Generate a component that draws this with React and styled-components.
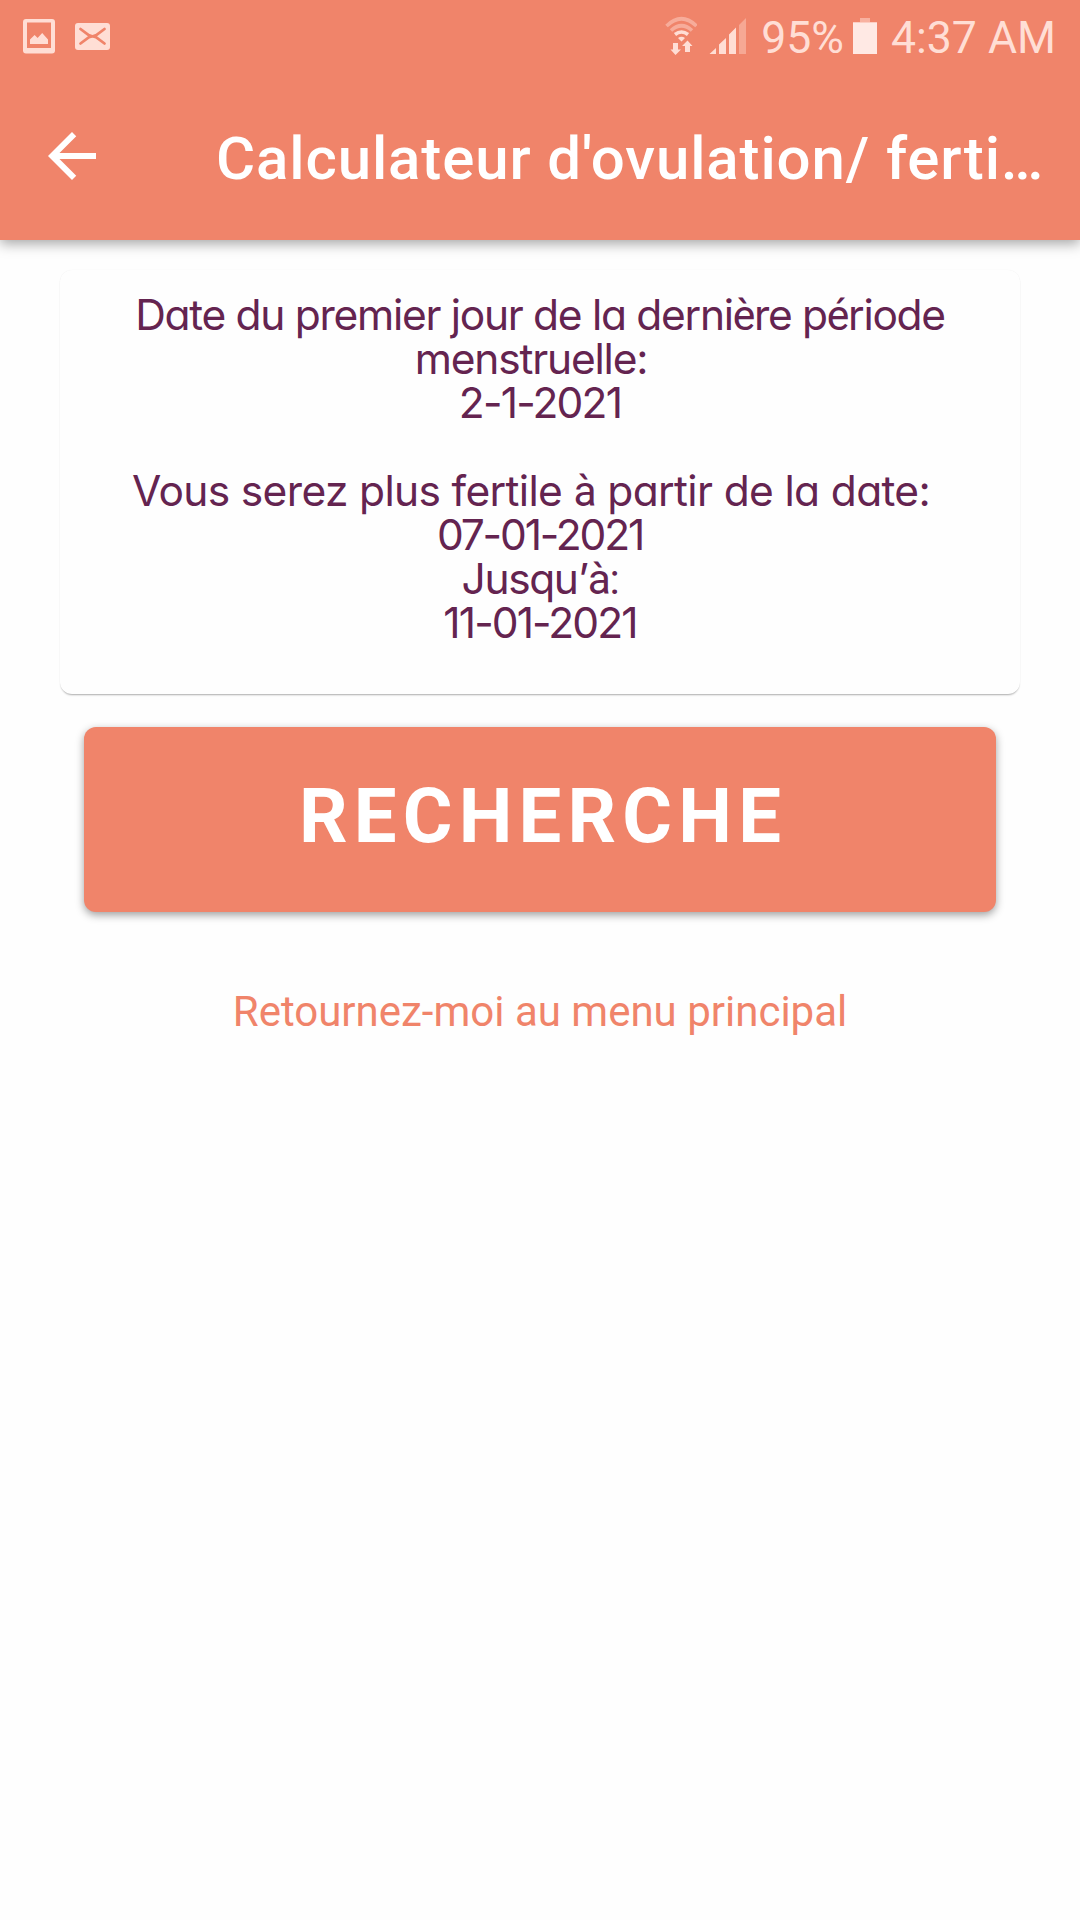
import React from 'react';
import styled, { createGlobalStyle } from 'styled-components';

const CORAL = '#f0846a';

const GlobalStyle = createGlobalStyle`
  body {
    margin: 0;
    background: #fefefe;
    font-family: Roboto, 'Liberation Sans', sans-serif;
  }
`;

const Screen = styled.div`
  width: 1080px;
  min-height: 1920px;
`;

const Header = styled.header`
  color: white;
  background: ${CORAL};
  box-shadow: 0 4px 12px rgba(0, 0, 0, 0.34);
`;

const StatusBar = styled.div`
  display: flex;
  justify-content: space-between;
  height: 72px;
  padding: 0 24px 0 23px;
  color: #ffded5;
`;

const StatusGroup = styled.div`
  display: flex;
  align-items: flex-start;
`;

const StatusText = styled.span`
  margin-left: ${p => p.$left}px;
  font-size: 44.6px;
  line-height: 76px;
`;

const StatusIcon = styled.svg`
  display: block;
  margin-left: ${p => p.$left || 0}px;
`;

const Toolbar = styled.div`
  display: flex;
  align-items: center;
  height: 168px;
  padding-left: 36px;
`;

const BackButton = styled.button`
  width: 72px;
  height: 72px;
  margin-right: 108px;
  padding: 0;
  border: none;
  background: none;

  svg {
    display: block;
  }
`;

const Title = styled.h1`
  margin: 5px 0 0;
  font-size: 60px;
  font-weight: 500;
  line-height: 72px;
  letter-spacing: 0.88px;
  white-space: nowrap;
`;

const Main = styled.main`
  display: flex;
  flex-direction: column;
  align-items: center;
  padding-top: 30px;
`;

const Card = styled.section`
  box-sizing: border-box;
  width: 960px;
  height: 424px;
  padding-top: 23px;
  border-radius: 12px;
  background: #fefefe;
  box-shadow: 0 2px 2px -1px rgba(0, 0, 0, 0.32), 0 0 1px rgba(0, 0, 0, 0.08);
`;

const Line = styled.p`
  height: 44px;
  margin: 0;
  padding-right: ${p => p.$trail || 0}px;
  text-align: center;
  white-space: nowrap;
  color: #642450;
  font-family: Inter, sans-serif;
  font-size: 42.5px;
  font-weight: 370;
  font-feature-settings: 'cv11';
  line-height: 44px;
  letter-spacing: ${p => p.$spacing}px;
`;

// accented letters come from the system font
const Accent = styled.span`
  font-family: Roboto, sans-serif;
  font-weight: 400;
  line-height: 0;
`;

const SearchButton = styled.button`
  width: 912px;
  height: 185px;
  margin-top: 33px;
  padding: 0 0 7px 6px;
  border: none;
  border-radius: 12px;
  color: white;
  background: ${CORAL};
  box-shadow: 0 3px 8px rgba(0, 0, 0, 0.38);
  font-family: inherit;
  font-size: 76px;
  font-weight: 700;
  letter-spacing: 6.2px;
`;

const MenuLink = styled.a`
  margin-top: 75px;
  color: ${CORAL};
  font-size: 42px;
  line-height: 50px;
`;

const ImageIcon = () => (
  <StatusIcon width="32" height="76" viewBox="23 0 32 76">
    <path
      fill="currentColor"
      fillRule="evenodd"
      d="M26 19H52Q55 19 55 22V50.5Q55 53.5 52 53.5H26Q23 53.5 23 50.5V22Q23 19 26 19ZM27 22.5V48H51V22.5Z"
    />
    <path fill="currentColor" d="M30 44V39.5L34.6 35L37.6 38L42.2 33L48 39.5V44Z" />
  </StatusIcon>
);

const MailIcon = () => (
  <StatusIcon $left={20} width="35" height="76" viewBox="75 0 35 76">
    <rect x="75" y="23" width="35" height="27" rx="3" fill="currentColor" />
    <path
      d="M80.5 29L89 35.3Q92.5 37.3 96 35.3L104.5 29M80.5 43.5L89 37.2Q92.5 35.5 96 37.2L104.5 43.5"
      fill="none"
      stroke={CORAL}
      strokeWidth="2.8"
      strokeLinecap="round"
    />
  </StatusIcon>
);

const WifiIcon = () => (
  <StatusIcon width="32" height="76" viewBox="664 0 32 76">
    <g fill="none" stroke="currentColor" strokeWidth="3.6">
      <path d="M665.5 26Q680.5 11.5 695.5 26" opacity="0.45" />
      <path d="M670 30.5Q680.5 21 691 30.5" opacity="0.45" />
      <path d="M674 34.5Q680.5 29.5 687 34.5" />
    </g>
    <path
      fill="currentColor"
      d="M677 38Q680.5 35.5 684 38L680.5 41.5ZM672 43H677V49.5H680L674.5 55L669.5 49.5H672ZM684 52V46H681L686.5 40.5L691.5 46H689V52Z"
    />
  </StatusIcon>
);

const SignalIcon = () => (
  <StatusIcon $left={12} width="38" height="76" viewBox="708 0 38 76">
    <path
      fill="currentColor"
      d="M708.5 54L715 48V54ZM718 54V44.5L725 38V54ZM728 54V34.5L735 27.5V54Z"
    />
    <path fill="currentColor" opacity="0.4" d="M738 54V25L745 18V54Z" />
  </StatusIcon>
);

const BatteryIcon = () => (
  <StatusIcon $left={9} width="24" height="76" viewBox="852 0 24 76">
    <path fill="currentColor" opacity="0.5" d="M859 18H869V22H876V24H852V22H859Z" />
    <rect x="852" y="22.5" width="24" height="31.5" fill="#ffe9e4" />
  </StatusIcon>
);

const lines = [
  { text: 'Date du premier jour de la dernière période', spacing: -1.3 },
  { text: 'menstruelle:', spacing: -1.2, trail: 18 },
  { text: '2-1-2021', spacing: -1.8 },
  { text: '', spacing: 0 },
  { text: 'Vous serez plus fertile à partir de la date:', spacing: -0.65, trail: 18 },
  { text: '07-01-2021', spacing: -2.15 },
  { text: 'Jusqu’à:', spacing: -1.4 },
  { text: '11-01-2021', spacing: -1.9 },
];

const renderText = text =>
  text
    .split(/(à:|[àèé])/)
    .map((part, i) => (i % 2 ? <Accent key={i}>{part}</Accent> : part));

export default function App() {
  return (
    <Screen>
      <GlobalStyle />
      <Header>
        <StatusBar>
          <StatusGroup>
            <ImageIcon />
            <MailIcon />
          </StatusGroup>
          <StatusGroup>
            <WifiIcon />
            <SignalIcon />
            <StatusText $left={14}>95%</StatusText>
            <BatteryIcon />
            <StatusText $left={14}>4:37 AM</StatusText>
          </StatusGroup>
        </StatusBar>
        <Toolbar>
          <BackButton aria-label="Retour">
            <svg width="72" height="72" viewBox="0 0 24 24" fill="white">
              <path d="M20 11H7.83l5.59-5.59L12 4l-8 8 8 8 1.41-1.41L7.83 13H20v-2z" />
            </svg>
          </BackButton>
          <Title>Calculateur d'ovulation/ ferti…</Title>
        </Toolbar>
      </Header>
      <Main>
        <Card>
          {lines.map((line, i) => (
            <Line key={i} $spacing={line.spacing} $trail={line.trail}>
              {renderText(line.text)}
            </Line>
          ))}
        </Card>
        <SearchButton>RECHERCHE</SearchButton>
        <MenuLink>Retournez-moi au menu principal</MenuLink>
      </Main>
    </Screen>
  );
}
